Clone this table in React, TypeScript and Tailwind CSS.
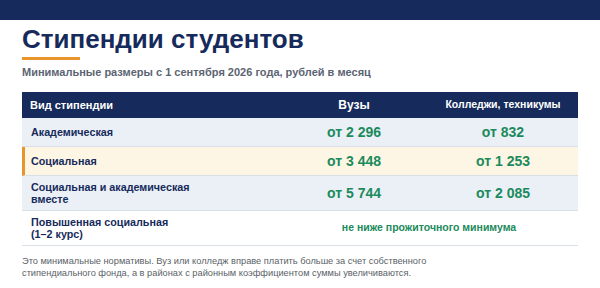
const rows = [
  { name: 'Академическая', uni: 'от 2 296', college: 'от 832', tone: 'blue' },
  { name: 'Социальная', uni: 'от 3 448', college: 'от 1 253', tone: 'accent' },
  { name: 'Социальная и академическая\nвместе', uni: 'от 5 744', college: 'от 2 085', tone: 'blue' },
]

export default function App() {
  return (
    <div className="w-[600px] h-[288px] bg-white overflow-hidden font-['Liberation_Sans',Arial,sans-serif]">
      <div className="h-5 bg-[#162b5b]" />

      <div className="px-[22px]">
        <h1 className="mt-[6px] text-[26px] leading-[26px] font-bold text-[#162b5b]">Стипендии студентов</h1>
        <div className="mt-[5px] w-[58px] h-[3px] bg-[#e8952e]" />
        <p className="mt-[6px] text-[11px] leading-[13px] font-bold text-[#5c6473]">
          Минимальные размеры с 1 сентября 2026 года, рублей в месяц
        </p>

        <div className="mt-[13px] w-[556px]">
          <div className="grid grid-cols-[258px_148px_150px] h-[26px] items-center bg-[#162b5b] text-white font-bold">
            <div className="pl-[8px] text-[11px]">Вид стипендии</div>
            <div className="text-center text-[12px]">Вузы</div>
            <div className="text-center text-[10.5px]">Колледжи, техникумы</div>
          </div>

          {rows.map((row, i) => (
            <div
              key={row.name}
              className={`grid items-center border-b border-[#d9dfe8] ${
                row.tone === 'accent'
                  ? 'grid-cols-[255px_148px_150px] bg-[#fef6e4] border-l-[3px] border-l-[#e8952e]'
                  : 'grid-cols-[258px_148px_150px] bg-[#ebf0f7]'
              } ${i === 2 ? 'h-[35px]' : 'h-[29px]'}`}
            >
              <div className={`${row.tone === 'accent' ? 'pl-[6px]' : 'pl-[9px]'} text-[10.75px] leading-[12px] font-bold text-[#162b5b] whitespace-pre-line`}>
                {row.name}
              </div>
              <div className="text-center text-[14px] font-bold text-[#1b8a5c]">{row.uni}</div>
              <div className="text-center text-[14px] font-bold text-[#1b8a5c]">{row.college}</div>
            </div>
          ))}

          <div className="grid grid-cols-[258px_298px] h-[35px] items-center border-b border-[#d9dfe8] bg-white">
            <div className="pl-[9px] text-[10.75px] leading-[12px] font-bold text-[#162b5b]">
              Повышенная социальная
              <br />
              (1–2 курс)
            </div>
            <div className="text-center text-[10.5px] font-bold text-[#1b8a5c]">не ниже прожиточного минимума</div>
          </div>
        </div>

        <p className="mt-[9px] text-[9.25px] leading-[12px] text-[#5a5f68]">
          Это минимальные нормативы. Вуз или колледж вправе платить больше за счет собственного
          <br />
          стипендиального фонда, а в районах с районным коэффициентом суммы увеличиваются.
        </p>
      </div>
    </div>
  )
}
